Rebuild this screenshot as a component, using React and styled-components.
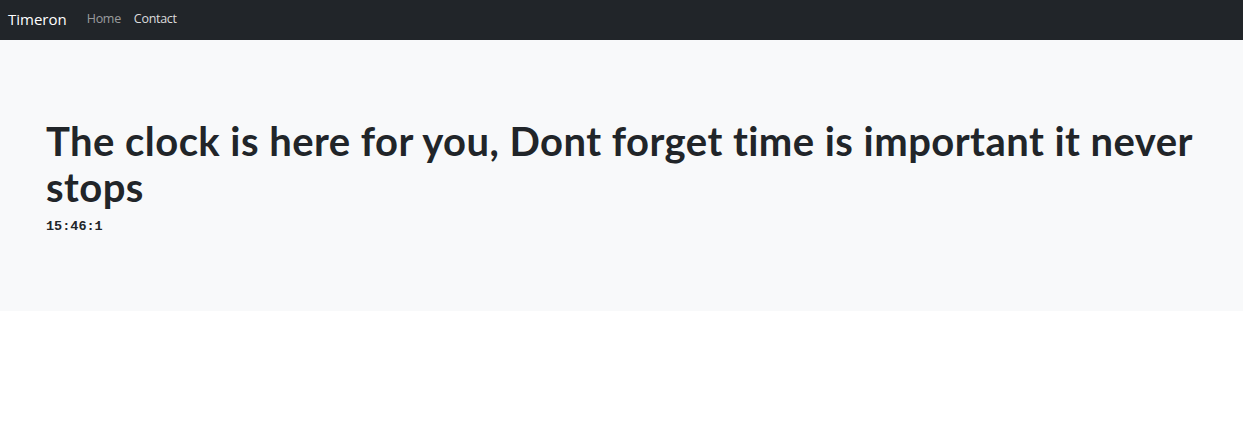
import React, { useState } from "react";
import styled, { createGlobalStyle } from "styled-components";

const GlobalStyle = createGlobalStyle`
  body {
    margin: 0;
    font-family: "Open Sans", "Noto Sans", sans-serif;
    color: #212529;
    background: #fff;
  }
`;

const Navbar = styled.nav`
  height: 40px;
  box-sizing: border-box;
  background: #212529;
  display: flex;
  align-items: center;
  padding: 0 8px 3px;
`;

const Brand = styled.a`
  color: #fff;
  font-size: 15px;
  margin-right: 20px;
  text-decoration: none;
`;

const NavLinks = styled.div`
  display: flex;
  gap: 13px;
`;

const NavLink = styled.a`
  color: ${(props) => (props.$active ? "rgba(255,255,255,0.55)" : "rgba(255,255,255,0.85)")};
  font-size: 12.5px;
  letter-spacing: -0.3px;
  text-decoration: none;
`;

const Jumbotron = styled.section`
  background: #f8f9fa;
  padding: 78px 46px 77px;
`;

const Heading = styled.h1`
  margin: 0;
  font-family: "Lato", "Open Sans", sans-serif;
  font-size: 40px;
  font-weight: 700;
  line-height: 46px;
  letter-spacing: 0.45px;
  font-variant-ligatures: none;
  color: #212529;
`;

const Clock = styled.div`
  margin-top: 9px;
  font-family: "Liberation Mono", monospace;
  font-weight: 700;
  font-size: 13.5px;
  color: #212529;
`;

const App = () => {
  const [time] = useState("15:46:1");

  return (
    <>
      <GlobalStyle />
      <Navbar>
        <Brand href="#">Timeron</Brand>
        <NavLinks>
          <NavLink href="#" $active>Home</NavLink>
          <NavLink href="#">Contact</NavLink>
        </NavLinks>
      </Navbar>
      <Jumbotron>
        <Heading>
          The clock is here for you, Dont forget time is important it never stops
        </Heading>
        <Clock>{time}</Clock>
      </Jumbotron>
    </>
  );
};

export default App;
